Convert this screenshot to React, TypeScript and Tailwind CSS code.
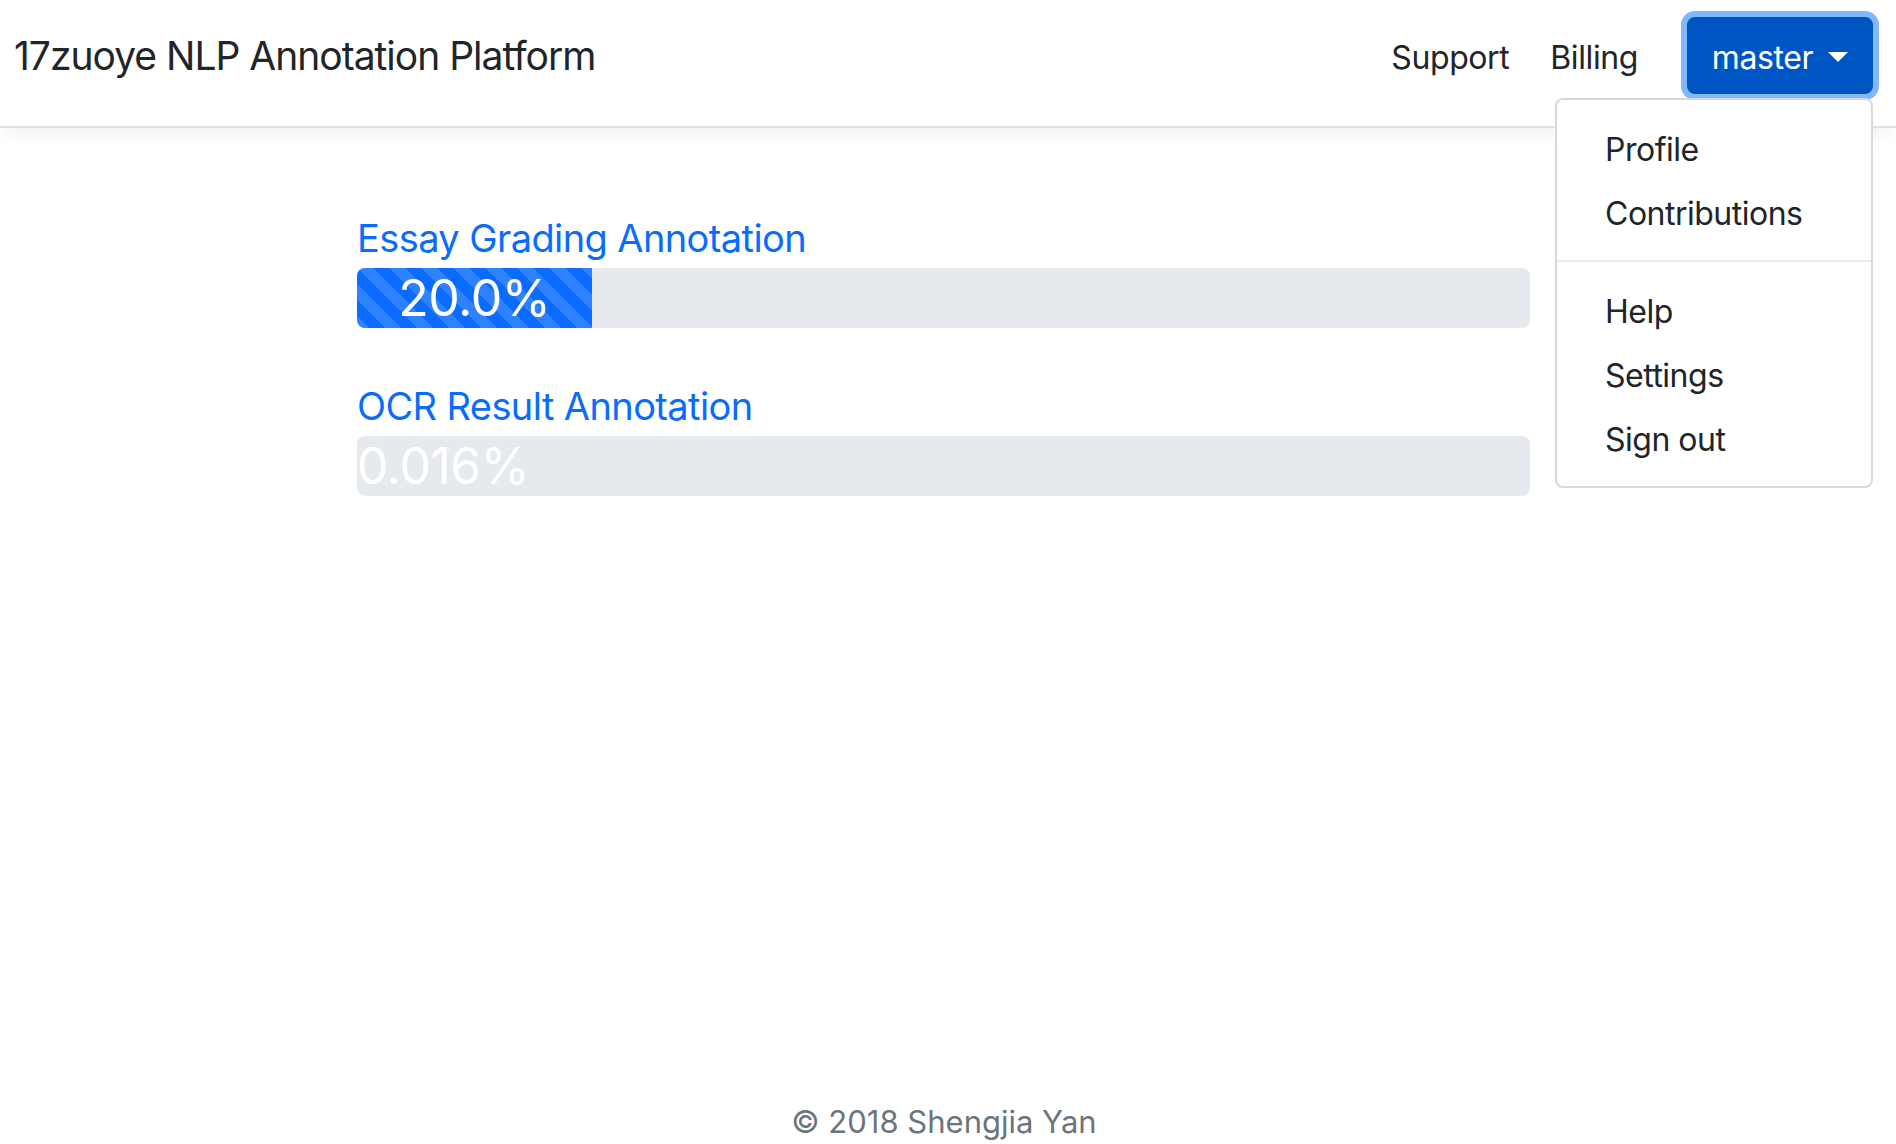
import React from 'react';

const font = { fontFamily: 'Inter, "Noto Sans", sans-serif' };

interface Task {
  name: string;
  percent: string;
  fill: string;
}

const tasks: Task[] = [
  { name: 'Essay Grading Annotation', percent: '20.0%', fill: '20%' },
  { name: 'OCR Result Annotation', percent: '0.016%', fill: '0' },
];

const stripes =
  'linear-gradient(45deg, rgba(255,255,255,.15) 25%, transparent 25%, transparent 50%, rgba(255,255,255,.15) 50%, rgba(255,255,255,.15) 75%, transparent 75%, transparent)';

const App: React.FC = () => {
  return (
    <div className="relative flex h-[1144px] flex-col bg-white text-[#212529]" style={font}>
      {/* navbar */}
      <header className="relative z-10 flex h-[128px] items-center border-b-2 border-[#dee2e6] bg-white pb-[16px] pl-[14px] pr-[23px] shadow-[0_10px_18px_-6px_rgba(0,0,0,0.07)]">
        <h5 className="pt-[2px] text-[39px] leading-[48px] tracking-[-1px]">17zuoye NLP Annotation Platform</h5>
        <nav className="ml-auto flex items-center text-[32px] leading-[48px] tracking-[-0.4px]">
          <a className="cursor-pointer pt-[5px]">Support</a>
          <a className="ml-[41px] cursor-pointer pt-[5px]">Billing</a>
          <button className="ml-[49px] flex h-[77px] w-[186px] items-center justify-center rounded-[8px] border-2 border-[#0052bf] bg-[#0055c4] text-white shadow-[0_0_0_6px_#7fb8ff]">
            <span className="pt-[5px] text-[32px] leading-[48px] tracking-[-0.4px]">master</span>
            <span className="ml-[15px] mt-[4px] h-0 w-0 border-x-[10px] border-t-[10px] border-x-transparent border-t-white" />
          </button>
        </nav>
      </header>

      {/* dropdown menu */}
      <div className="absolute right-[23px] top-[98px] z-20 w-[318px] rounded-[8px] border-2 border-[rgba(0,0,0,0.15)] bg-white pb-[14px] pt-[18px] text-[32px] leading-[48px] tracking-[-0.5px]">
        <a className="block px-[48px] py-[8px]">Profile</a>
        <a className="block px-[48px] py-[8px]">Contributions</a>
        <div className="mb-[18px] mt-[14px] border-t-2 border-[#e9ecef]" />
        <a className="block px-[48px] py-[8px]">Help</a>
        <a className="block px-[48px] py-[8px]">Settings</a>
        <a className="block px-[48px] py-[8px]">Sign out</a>
      </div>

      {/* tasks */}
      <main className="ml-[357px] w-[1173px] pt-[87px]">
        {tasks.map((t, i) => (
          <div key={t.name} className={i > 0 ? 'mt-[55px]' : ''}>
            <a className="block cursor-pointer text-[38px] leading-[46px] tracking-[-0.6px] text-[#0a6cff]">{t.name}</a>
            <div className="mt-[7px] flex h-[60px] overflow-hidden rounded-[8px] bg-[#e6e9ed]">
              {t.fill !== '0' ? (
                <div
                  className="flex h-full items-center justify-center bg-[#0a6cff] bg-[length:32px_32px] text-[50px] tracking-[-0.5px] text-white"
                  style={{ width: t.fill, backgroundImage: stripes }}
                >
                  {t.percent}
                </div>
              ) : (
                <div className="flex h-full items-center whitespace-nowrap text-[50px] tracking-[-0.5px] text-white">{t.percent}</div>
              )}
            </div>
          </div>
        ))}
      </main>

      {/* footer */}
      <footer className="mt-auto pb-[4px] pr-[8px] text-center text-[31px] leading-[36px] text-[#6c757d]">© 2018 Shengjia Yan</footer>
    </div>
  );
};

export default App;
